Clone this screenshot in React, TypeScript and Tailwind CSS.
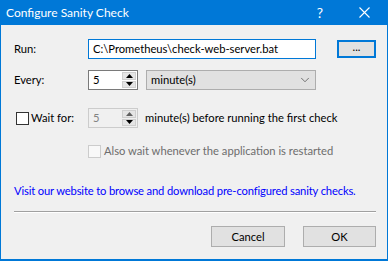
import { ChevronDown } from 'lucide-react'

function Spinner({ value, disabled }: { value: string; disabled?: boolean }) {
  return (
    <div
      className={`flex h-[20px] w-[50px] border ${
        disabled ? 'border-[#cccccc] bg-[#f0f0f0] text-[#838383]' : 'border-[#7a7a7a] bg-white text-black'
      }`}
    >
      <div className="flex flex-1 items-center pl-[4px]">{value}</div>
      <div className="flex w-[16px] flex-col gap-[1px] p-[1px]">
        <div className="flex flex-1 items-center justify-center border border-[#cfcfcf] bg-[#e5e5e5]">
          <svg width="7" height="4" viewBox="0 0 7 4">
            <polygon points="0,4 7,4 3.5,0" fill={disabled ? '#606060' : '#000'} />
          </svg>
        </div>
        <div className="flex flex-1 items-center justify-center border border-[#cfcfcf] bg-[#e5e5e5]">
          <svg width="7" height="4" viewBox="0 0 7 4">
            <polygon points="0,0 7,0 3.5,4" fill="#000" />
          </svg>
        </div>
      </div>
    </div>
  )
}

function Checkbox({ disabled }: { disabled?: boolean }) {
  return (
    <div
      className={`h-[13px] w-[13px] shrink-0 border ${
        disabled ? 'border-[#cccccc] bg-[#f8f8f8]' : 'border-[#333333] bg-white'
      }`}
    />
  )
}

export default function App() {
  return (
    <div className="flex h-[261px] w-[388px] flex-col border-x border-b-2 border-[#0078d7] bg-[#f0f0f0] font-['Lato',sans-serif] text-[11.2px] leading-[16px] text-black">
      <div className="flex h-[25px] shrink-0 items-center bg-[#0078d7] pl-[5px] text-[12px] text-white">
        <span className="flex-1">Configure Sanity Check</span>
        <span className="mr-[36px] text-[14px]">?</span>
        <svg width="11" height="11" viewBox="0 0 11 11" className="mr-[17px]">
          <path d="M0.5 0.5 L10.5 10.5 M10.5 0.5 L0.5 10.5" stroke="#fff" strokeWidth="1.1" />
        </svg>
      </div>

      <div className="flex flex-1 flex-col pl-[13px] pr-[11px]">
        <div className="mt-[14px] flex h-[20px] items-center">
          <span className="w-[74px]">Run:</span>
          <div className="flex h-[20px] w-[228px] items-center border border-[#0078d7] bg-white pl-[4px]">
            C:\Prometheus\check-web-server.bat
          </div>
          <button className="ml-[21px] flex h-[18px] w-[39px] items-center justify-center border-2 border-[#0078d7] bg-[#e1e1e1] pb-[4px]">
            ...
          </button>
        </div>

        <div className="mt-[11px] flex h-[20px] items-center">
          <span className="w-[74px]">Every:</span>
          <Spinner value="5" />
          <div className="ml-[8px] flex h-[20px] w-[170px] items-center justify-between border border-[#adadad] bg-[#e1e1e1] pl-[4px] pr-[3px]">
            <span>minute(s)</span>
            <ChevronDown size={14} strokeWidth={1.2} className="text-[#444]" />
          </div>
        </div>

        <div className="mt-[18px] flex h-[20px] items-center">
          <div className="flex w-[74px] items-center gap-[2px] pl-[2px]">
            <Checkbox />
            <span>Wait for:</span>
          </div>
          <Spinner value="5" disabled />
          <span className="ml-[7px]">minute(s) before running the first check</span>
        </div>

        <div className="ml-[74px] mt-[16px] flex h-[14px] items-center gap-[3px] text-[#6d6d6d]">
          <Checkbox disabled />
          <span>Also wait whenever the application is restarted</span>
        </div>

        <div className="mt-[25px] whitespace-nowrap tracking-[-0.15px] text-[#0000ff]">
          Visit our website to browse and download pre-configured sanity checks.
        </div>

        <div className="mt-[12px] h-[2px] border-t border-[#a0a0a0] border-b border-b-white" />

        <div className="mt-[13px] flex justify-end gap-[18px]">
          <button className="h-[21px] w-[74px] border border-[#adadad] bg-[#e1e1e1]">Cancel</button>
          <button className="h-[21px] w-[73px] border border-[#adadad] bg-[#e1e1e1]">OK</button>
        </div>
      </div>
    </div>
  )
}
